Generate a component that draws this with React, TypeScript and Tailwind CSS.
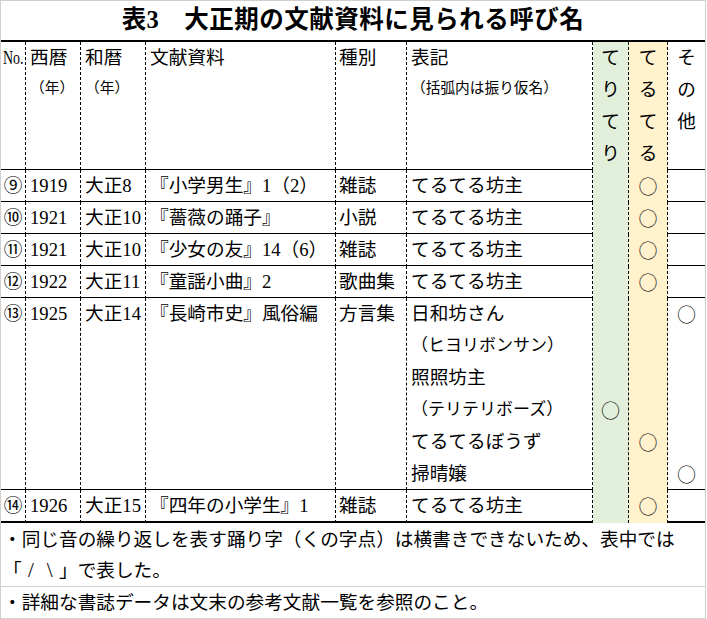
const font = "font-['Liberation_Serif','Noto_Sans_CJK_JP',serif]";
const cols = "grid grid-cols-[25px_55px_65px_190px_71px_186px_36px_39px_37px]";
const line = "border-r border-dashed border-black";
const green = "bg-[#e2efda]";
const yellow = "bg-[#fff2cc]";

type Row = { no: string; year: string; era: string; src: string; kind: string; label: string };

const rows: Row[] = [
  { no: "⑨", year: "1919", era: "大正8", src: "『小学男生』1（2）", kind: "雑誌", label: "てるてる坊主" },
  { no: "⑩", year: "1921", era: "大正10", src: "『薔薇の踊子』", kind: "小説", label: "てるてる坊主" },
  { no: "⑪", year: "1921", era: "大正10", src: "『少女の友』14（6）", kind: "雑誌", label: "てるてる坊主" },
  { no: "⑫", year: "1922", era: "大正11", src: "『童謡小曲』2", kind: "歌曲集", label: "てるてる坊主" },
];

const Vertical = ({ chars }: { chars: string }) => (
  <div className="flex flex-col items-center">
    {chars.split("").map((c, i) => (
      <div key={i} className="h-[32px] leading-[32px]">
        {c}
      </div>
    ))}
  </div>
);

// the "○" glyph in the CJK font is the full-size circle used in the sheet
const Circle = () => <span className="font-['Noto_Sans_CJK_JP',sans-serif] font-light text-[19px]">○</span>;
const Mark = () => (
  <div className="h-[32px] leading-[32px] text-center">
    <Circle />
  </div>
);
const Blank = () => <div className="h-[32px]" />;

const DataRow = ({ r, last }: { r: Row; last?: boolean }) => (
  <div
    className={`${cols} ${last ? "h-[33px] border-b-2" : "h-[32px] border-b"} border-black leading-[31px]`}
  >
    <div className={`${line} text-center`}>{r.no}</div>
    <div className={`${line} pl-1`}>{r.year}</div>
    <div className={`${line} pl-1`}>{r.era}</div>
    <div className={`${line} pl-1 whitespace-nowrap`}>{r.src}</div>
    <div className={`${line} pl-[3px]`}>{r.kind}</div>
    <div className={`${line} pl-1`}>{r.label}</div>
    <div className={`${line} ${green}`} />
    <div className={`${line} ${yellow} text-center`}>
      <Circle />
    </div>
    <div />
  </div>
);

export default function App() {
  return (
    <div className={`${font} w-[707px] h-[619px] bg-white text-black text-[18.67px]`}>
      <div className="w-[706px] h-[619px] border border-[#d0d0d0]">
        {/* title */}
        <div className="h-[41px] border-b-2 border-black flex items-center justify-center">
          <h1 className="text-[24.5px] font-bold tracking-[0.5px]">表3　大正期の文献資料に見られる呼び名</h1>
        </div>

        {/* header */}
        <div className={`${cols} h-[128px] border-b border-black`}>
          <div className={`${line} pl-[2px] leading-[32px]`}>
            <span className="inline-block origin-left scale-x-75 font-['Liberation_Serif',serif]">No.</span>
          </div>
          <div className={`${line} pl-1`}>
            <div className="h-[32px] leading-[32px]">西暦</div>
            <div className="h-[32px] leading-[28px] text-[14.7px]">（年）</div>
          </div>
          <div className={`${line} pl-1`}>
            <div className="h-[32px] leading-[32px]">和暦</div>
            <div className="h-[32px] leading-[28px] text-[14.7px]">（年）</div>
          </div>
          <div className={`${line} pl-1 leading-[32px]`}>文献資料</div>
          <div className={`${line} pl-[3px] leading-[32px]`}>種別</div>
          <div className={`${line} pl-1`}>
            <div className="h-[32px] leading-[32px]">表記</div>
            <div className="h-[32px] leading-[28px] text-[14.7px]">（括弧内は振り仮名）</div>
          </div>
          <div className={`${line} ${green}`}>
            <Vertical chars="てりてり" />
          </div>
          <div className={`${line} ${yellow}`}>
            <Vertical chars="てるてる" />
          </div>
          <div>
            <Vertical chars="その他" />
          </div>
        </div>

        {rows.map((r) => (
          <DataRow key={r.no} r={r} />
        ))}

        {/* row 13: several names */}
        <div className={`${cols} h-[192px] border-b border-black leading-[32px]`}>
          <div className={`${line} text-center`}>⑬</div>
          <div className={`${line} pl-1`}>1925</div>
          <div className={`${line} pl-1`}>大正14</div>
          <div className={`${line} pl-1 whitespace-nowrap`}>『長崎市史』風俗編</div>
          <div className={`${line} pl-[3px]`}>方言集</div>
          <div className={`${line} pl-1 whitespace-nowrap`}>
            <div className="h-[32px]">日和坊さん</div>
            <div className="h-[32px] text-[17px]">（ヒヨリボンサン）</div>
            <div className="h-[32px]">照照坊主</div>
            <div className="h-[32px] text-[17px]">（テリテリボーズ）</div>
            <div className="h-[32px]">てるてるぼうず</div>
            <div className="h-[32px]">掃晴嬢</div>
          </div>
          <div className={`${line} ${green}`}>
            <Blank />
            <Blank />
            <Blank />
            <Mark />
          </div>
          <div className={`${line} ${yellow}`}>
            <Blank />
            <Blank />
            <Blank />
            <Blank />
            <Mark />
          </div>
          <div>
            <Mark />
            <Blank />
            <Blank />
            <Blank />
            <Blank />
            <Mark />
          </div>
        </div>

        <DataRow
          last
          r={{ no: "⑭", year: "1926", era: "大正15", src: "『四年の小学生』1", kind: "雑誌", label: "てるてる坊主" }}
        />

        {/* notes */}
        <div className="h-[64px] border-b border-[#d0d0d0] pl-[2px] leading-[31px] pt-[1px] whitespace-nowrap">
          <div>・同じ音の繰り返しを表す踊り字（くの字点）は横書きできないため、表中では</div>
          <div>
            「<span className="inline-block w-[18.67px] text-center text-[21px] font-light">/</span>
            <span className="inline-block w-[18.67px] text-center text-[21px] font-light">\</span>」で表した。
          </div>
        </div>
        <div className="h-[31px] pl-[2px] leading-[31px] whitespace-nowrap">
          ・詳細な書誌データは文末の参考文献一覧を参照のこと。
        </div>
      </div>
    </div>
  );
}
